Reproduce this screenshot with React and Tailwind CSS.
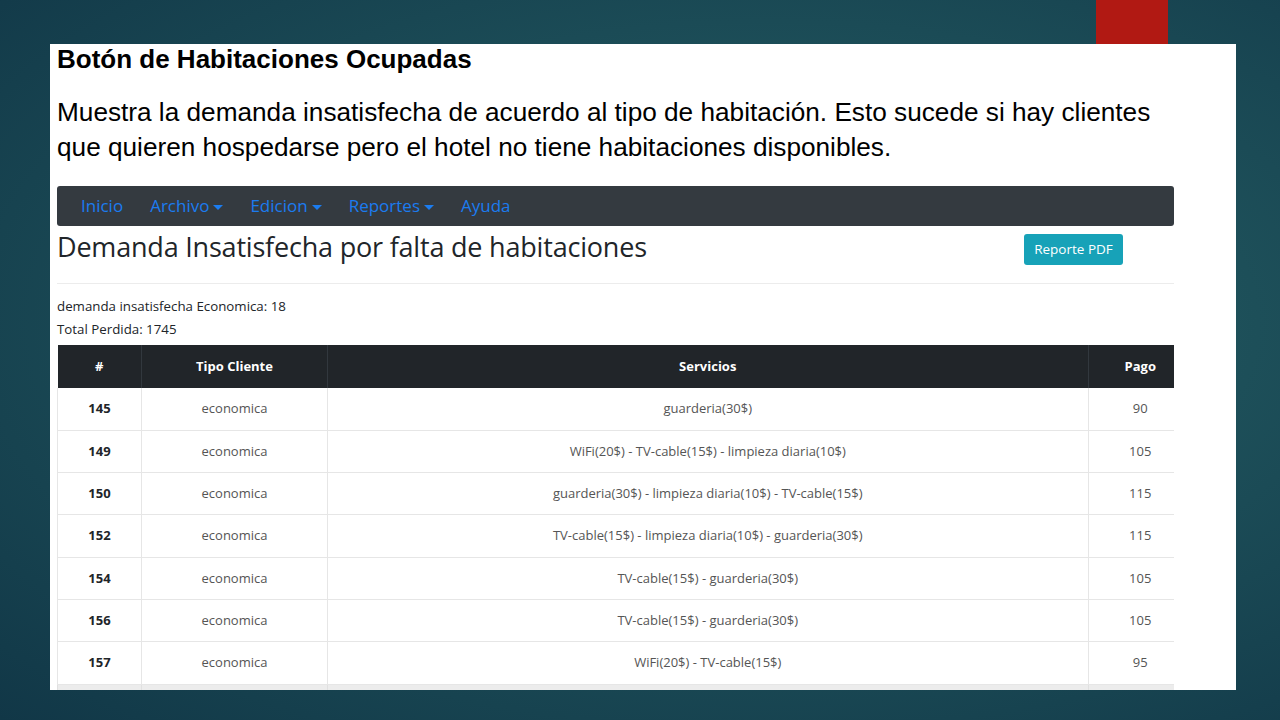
import React from "react";

const rows = [
  { id: 145, tipo: "economica", servicios: "guarderia(30$)", pago: 90 },
  { id: 149, tipo: "economica", servicios: "WiFi(20$) - TV-cable(15$) - limpieza diaria(10$)", pago: 105 },
  { id: 150, tipo: "economica", servicios: "guarderia(30$) - limpieza diaria(10$) - TV-cable(15$)", pago: 115 },
  { id: 152, tipo: "economica", servicios: "TV-cable(15$) - limpieza diaria(10$) - guarderia(30$)", pago: 115 },
  { id: 154, tipo: "economica", servicios: "TV-cable(15$) - guarderia(30$)", pago: 105 },
  { id: 156, tipo: "economica", servicios: "TV-cable(15$) - guarderia(30$)", pago: 105 },
  { id: 157, tipo: "economica", servicios: "WiFi(20$) - TV-cable(15$)", pago: 95 },
];

const Caret = () => (
  <span className="inline-block ml-[4px] align-middle border-l-[5px] border-r-[5px] border-t-[5px] border-l-transparent border-r-transparent border-t-[#1b7cf0]" />
);

export default function App() {
  return (
    <div className="w-[1280px] h-[720px] overflow-hidden bg-[radial-gradient(ellipse_at_60%_45%,#2c6567_0%,#1d4f59_45%,#113747_100%)]">
      {/* top strip with the red tab */}
      <div className="h-[44px] flex">
        <div className="ml-[1096px] w-[72px] h-[44px] bg-[#b11913]" />
      </div>

      <div className="ml-[50px] w-[1186px] h-[646px] bg-white overflow-hidden pl-[7px] pr-[62px] font-['Liberation_Sans',Arial,sans-serif] text-black">
        <h1 className="text-[26px] leading-[28px] font-bold mt-[1px]">Botón de Habitaciones Ocupadas</h1>
        <p className="text-[26.2px] leading-[35px] mt-[22px]">
          Muestra la demanda insatisfecha de acuerdo al tipo de habitación. Esto sucede si hay clientes que quieren hospedarse pero el hotel no tiene habitaciones disponibles.
        </p>

        <div className="font-['Open_Sans',sans-serif]">
          <nav className="mt-[21px] h-[40px] bg-[#343a40] rounded-[3px] flex items-center pl-[24px] gap-[27px] text-[17px] text-[#1b7cf0]">
            <span>Inicio</span>
            <span>Archivo<Caret /></span>
            <span>Edicion<Caret /></span>
            <span>Reportes<Caret /></span>
            <span>Ayuda</span>
          </nav>

          <div className="flex items-start justify-between h-[58px] border-b border-[#ececec]">
            <h2 className="text-[27px] leading-[30px] mt-[6px] text-[#212529] font-medium tracking-[-0.2px]">Demanda Insatisfecha por falta de habitaciones</h2>
            <button className="mt-[8px] mr-[51px] w-[99px] h-[31px] rounded-[3px] bg-[#17a2b8] text-white text-[13.5px]">Reporte PDF</button>
          </div>

          <div className="text-[13.3px] text-[#212529] leading-[23px] pt-[11px] pb-[4px]">
            <div>demanda insatisfecha Economica: 18</div>
            <div>Total Perdida: 1745</div>
          </div>

          <div className="overflow-hidden">
            <table className="w-[1135px] border-collapse text-[13px] text-center">
              <thead>
                <tr className="bg-[#212529] text-white h-[43px]">
                  <th className="w-[84px] border-r border-[#32383e] font-bold">#</th>
                  <th className="w-[186px] border-r border-[#32383e] font-bold">Tipo Cliente</th>
                  <th className="border-r border-[#32383e] font-bold">Servicios</th>
                  <th className="w-[104px] font-bold">Pago</th>
                </tr>
              </thead>
              <tbody>
                {rows.map((r) => (
                  <tr key={r.id} className="h-[42.3px] border-b border-[#e6e6e6]">
                    <td className="font-bold text-[#212529] border-l border-r border-[#e6e6e6]">{r.id}</td>
                    <td className="text-[#555] border-r border-[#e6e6e6]">{r.tipo}</td>
                    <td className="text-[#555] border-r border-[#e6e6e6]">{r.servicios}</td>
                    <td className="text-[#555]">{r.pago}</td>
                  </tr>
                ))}
                <tr className="h-[42px] bg-[#ececec]">
                  <td className="border-l border-r border-[#e0e0e0]" />
                  <td className="border-r border-[#e0e0e0]" />
                  <td className="border-r border-[#e0e0e0]" />
                  <td />
                </tr>
              </tbody>
            </table>
          </div>
        </div>
      </div>
    </div>
  );
}
